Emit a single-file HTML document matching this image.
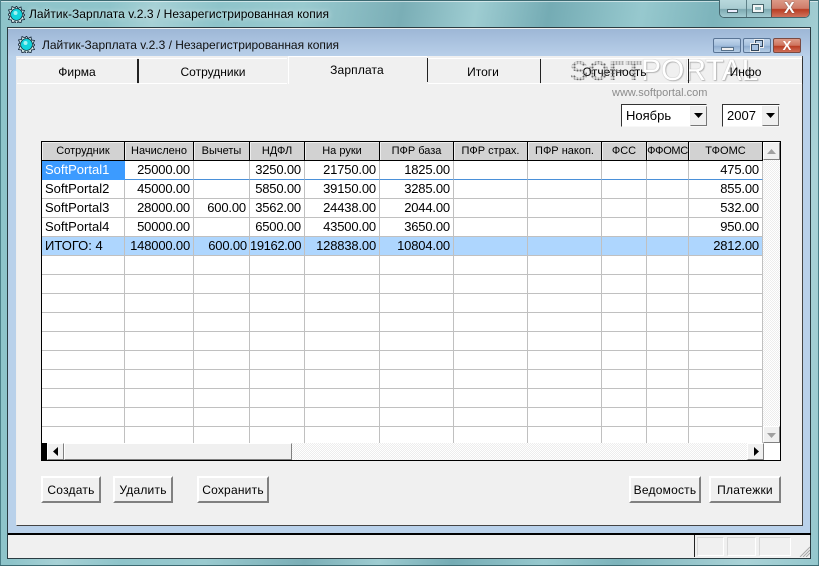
<!DOCTYPE html>
<html><head><meta charset="utf-8">
<style>
html,body{margin:0;padding:0}
body{width:819px;height:566px;overflow:hidden;position:relative;font-family:"Liberation Sans",sans-serif;color:#000;background:#8cc3c9}
.a{position:absolute}
.glass{left:0;top:0;width:819px;height:566px;background:
linear-gradient(100deg,rgba(255,255,255,0) 0,rgba(255,255,255,0) 12%,rgba(255,255,255,.22) 17%,rgba(255,255,255,0) 24%,rgba(255,255,255,.1) 33%,rgba(0,40,60,.14) 44%,rgba(255,255,255,.14) 52%,rgba(0,60,80,.18) 60%,rgba(255,255,255,.08) 70%,rgba(0,60,80,.12) 78%,rgba(255,255,255,.25) 92%,rgba(255,255,255,.05) 100%),#8ec4ca}
.t{white-space:nowrap}
.tab{position:absolute;top:58px;height:24px;font-size:12px;line-height:26px;text-align:center;background:#f0f0f0;border-top:1px solid #fff;border-bottom:1px solid #fff}
.lbl{position:absolute;top:59px;height:24px;font-size:12px;line-height:26px;text-align:center}
.sep{position:absolute;top:59px;height:24px;width:1px;background:#222}
table{position:absolute;left:42px;top:142px;border-collapse:separate;border-spacing:0;table-layout:fixed;width:721px;font-size:13px}
td,th{padding:0;overflow:hidden;white-space:nowrap;box-sizing:border-box;height:19px}
th{font-weight:normal;font-size:11px;background:#d2d2d2;border-right:1px solid #000;border-bottom:1px solid #000;text-align:center;line-height:17px;box-shadow:inset 1px 1px 0 #eee}
td{border-right:1px solid #c0c0c0;border-bottom:1px solid #c0c0c0;text-align:right;padding-right:3px;line-height:18px;background:#fff;letter-spacing:-.17px}
td:first-child{text-align:left;padding:0 0 0 3px;letter-spacing:0}
tr.s td{background:#aed6fe}
tr.r1 td{border-bottom-color:#4a90d9}
td.sel{background:#3c9bff!important;color:#fff;border-right-color:#3c9bff!important;border-bottom-color:#3c9bff!important}
.btn{position:absolute;box-sizing:border-box;top:476px;height:27px;background:#f0f0f0;border:2px solid;border-color:#fff #808080 #808080 #fff;font-size:12px;line-height:24px;text-align:center;letter-spacing:.22px}
.sb{position:absolute;box-sizing:border-box;background:#f0f0f0;border:1px solid;border-color:#fff #808080 #808080 #fff}
.combo{position:absolute;box-sizing:border-box;top:104px;height:23px;background:#fff;border:1px solid;border-color:#333 #f8f8f8 #f8f8f8 #333;font-size:13px;line-height:22px;padding-left:4px}
.hatch{background-color:#f8f8f8;background-image:repeating-conic-gradient(#ededed 0 25%,#fff 0 50%);background-size:2px 2px}
.st{position:absolute;top:537px;height:19px;box-sizing:border-box;border:1px solid #fff;border-color:#d8d8d8 #fff #fff #d8d8d8}
</style></head><body>
<div class="a glass"></div>
<div class="a" style="left:0;top:0;width:819px;height:1px;background:#3c6a72"></div>
<div class="a" style="left:0;top:0;width:1px;height:566px;background:#4b7f88"></div>
<div class="a" style="left:818px;top:0;width:1px;height:566px;background:#4b7f88"></div>
<div class="a" style="left:0;top:565px;width:819px;height:1px;background:#3c6a72"></div>
<div class="a" style="left:1px;top:1px;width:817px;height:1px;background:rgba(255,255,255,.55)"></div>

<svg class="a" style="left:8px;top:6px" width="17" height="17" viewBox="0 0 17 17"><path d="M8.500 0l1.500 2.500 3-1.500.5 3 3 .5-1.500 3 2 1.500-2 1.500 1.500 3-3 .5-.5 3-3-1.500-1.500 2.500-1.500-2.500-3 1.500-.5-3-3-.5 1.500-3L0 8.500l2-1.500-1.500-3 3-.5.5-3 3 1.500z" fill="#d8ecec" stroke="#123" stroke-width=".8"/><circle cx="8.500" cy="8.500" r="6.300" fill="#0b3540"/><circle cx="8.500" cy="8.500" r="5.500" fill="#12d4dc"/><circle cx="7.500" cy="7" r="2" fill="#9ef4f4"/></svg>
<div class="a t" style="left:29px;top:7px;font-size:12px;line-height:15px;letter-spacing:.04px;text-shadow:0 0 6px rgba(255,255,255,.8)">Лайтик-Зарплата v.2.3 / Незарегистрированная копия</div>

<!-- outer caption buttons -->
<div class="a" style="left:719px;top:0;width:91px;height:18px;border:1px solid #45666e;border-top:0;border-radius:0 0 5px 5px;box-sizing:border-box;overflow:hidden">
<div class="a" style="left:0;top:0;width:26px;height:17px;background:linear-gradient(#b8d8dc,#a9ccd1 50%,#7da9b1 55%,#a4ccd2)"></div>
<div class="a" style="left:26px;top:0;width:25px;height:17px;border-left:1px solid #5f8188;background:linear-gradient(#b8d8dc,#a9ccd1 50%,#7da9b1 55%,#a4ccd2)"></div>
<div class="a" style="left:51px;top:0;width:40px;height:17px;border-left:1px solid #6d4b44;background:linear-gradient(#dc9a88,#cf7b68 50%,#b93c22 55%,#d0735d)"></div>
<div class="a" style="left:7px;top:9px;width:9px;height:2px;background:#eef;border:1px solid #45636a"></div>
<div class="a" style="left:33px;top:5px;width:6px;height:3px;border:2px solid #f4f6f6;outline:1px solid #45636a;background:#8fb5bb"></div>
<div class="a t" style="left:64px;top:0;font:bold 16px/17px 'Liberation Sans',sans-serif;color:#fff;text-shadow:0 0 1px #333">X</div>
</div>

<!-- client -->
<div class="a" style="left:7px;top:27px;width:804px;height:532px;background:#f0f0f0;border:1px solid #2a3c42;box-sizing:border-box"></div>
<!-- MDI -->
<div class="a" style="left:8px;top:29px;width:802px;height:504px;background:#b9d1ea"></div>
<div class="a" style="left:8px;top:29px;width:802px;height:27px;background:linear-gradient(#9db7d6,#b8cfe9)"></div>
<div class="a" style="left:8px;top:533px;width:803px;height:2px;background:#000"></div>
<div class="a" style="left:16px;top:56px;width:787px;height:470px;background:#f0f0f0;border-left:1px solid #eee;border-right:1px solid #444;border-bottom:1px solid #444;box-sizing:border-box"></div>
<svg class="a" style="left:18px;top:36px" width="17" height="17" viewBox="0 0 17 17"><path d="M8.500 0l1.500 2.500 3-1.500.5 3 3 .5-1.500 3 2 1.500-2 1.500 1.500 3-3 .5-.5 3-3-1.500-1.500 2.500-1.500-2.500-3 1.500-.5-3-3-.5 1.500-3L0 8.500l2-1.500-1.500-3 3-.5.5-3 3 1.500z" fill="#d8ecec" stroke="#123" stroke-width=".8"/><circle cx="8.500" cy="8.500" r="6.300" fill="#0b3540"/><circle cx="8.500" cy="8.500" r="5.500" fill="#12d4dc"/><circle cx="7.500" cy="7" r="2" fill="#9ef4f4"/></svg>
<div class="a t" style="left:42px;top:38px;font-size:12px;line-height:15px;letter-spacing:-.02px;color:#111">Лайтик-Зарплата v.2.3 / Незарегистрированная копия</div>
<div class="a" style="left:713px;top:38px;width:28px;height:15px;box-sizing:border-box;border:1px solid #5a7596;border-radius:2px;background:linear-gradient(#c2d6ec,#a5c0de 50%,#8fadd0 55%,#b5cde6)"><div class="a" style="left:7px;top:8px;width:11px;height:2px;background:#eee;border:1px solid #56708a"></div></div>
<div class="a" style="left:743px;top:38px;width:28px;height:15px;box-sizing:border-box;border:1px solid #5a7596;border-radius:2px;background:linear-gradient(#c2d6ec,#a5c0de 50%,#8fadd0 55%,#b5cde6)"><div class="a" style="left:11px;top:1px;width:6px;height:5px;border:1px solid #33475c;outline:1px solid #eee"></div><div class="a" style="left:7px;top:5px;width:6px;height:5px;border:1px solid #33475c;outline:1px solid #eee;background:#a5c0de"></div></div>
<div class="a" style="left:773px;top:38px;width:28px;height:15px;box-sizing:border-box;border:1px solid #7a4a42;border-radius:2px;background:linear-gradient(#dd9b88,#cf735d 50%,#b93c22 55%,#cf6f58);color:#fff;font:bold 13px/13px 'Liberation Sans',sans-serif;text-align:center">X</div>

<!-- tabs -->
<div class="tab" style="left:17px;width:120px">Фирма</div>
<div class="sep" style="left:137px;width:2px"></div>
<div class="tab" style="left:139px;width:148px">Сотрудники</div>
<div class="a" style="left:288px;top:56px;width:137px;height:28px;background:#f0f0f0;border-top:1px solid #fff;box-sizing:border-box;border-left:1px solid #fff;font-size:12px;line-height:26px;text-align:center;letter-spacing:.15px">Зарплата</div>
<div class="a" style="left:425px;top:56px;width:2px;height:28px;background:#f0f0f0;border-top:1px solid #fff;box-sizing:border-box"></div>
<div class="sep" style="left:427px;top:58px"></div>
<div class="tab" style="left:428px;width:110px">Итоги</div>
<div class="a" style="left:538px;top:58px;width:2px;height:24px;background:#f0f0f0;border-top:1px solid #fff;border-bottom:1px solid #fff"></div>
<div class="sep" style="left:540px"></div>
<div class="tab" style="left:541px;width:147px"></div>
<div class="tab" style="left:689px;width:113px"></div>
<div class="a" style="left:802px;top:58px;width:1px;height:26px;background:#333"></div>

<!-- watermark -->
<div class="a t" style="left:641px;top:56px;font-size:30px;line-height:30px;color:#fff;text-shadow:0 0 1px #999,1px 1px 1px #bbb">PORTAL</div>
<div class="sep" style="left:688px"></div>
<div class="lbl" style="left:541px;width:147px">Отчетность</div>
<div class="lbl" style="left:689px;width:113px">Инфо</div>
<div class="a t" style="left:570px;top:57px;font:bold 27px/28px 'Liberation Sans',sans-serif;color:transparent;background:radial-gradient(circle,#666 0 1px,transparent 1.2px) 0 0/3px 3px;-webkit-background-clip:text;background-clip:text">SOFT</div>
<div class="a t" style="left:612px;top:87px;font-size:11px;line-height:13px;color:#8c8c8c">www.softportal.com</div>

<!-- combos -->
<div class="combo" style="left:621px;width:86px">Ноябрь<div class="sb" style="left:68px;top:1px;width:17px;height:20px;border-color:#eee #777 #777 #eee"><svg class="a" style="left:3px;top:6px" width="9" height="5"><path d="M0 0h9L4.500 5z"/></svg></div></div>
<div class="combo" style="left:722px;width:58px">2007<div class="sb" style="left:39px;top:1px;width:17px;height:20px;border-color:#eee #777 #777 #eee"><svg class="a" style="left:3px;top:6px" width="9" height="5"><path d="M0 0h9L4.500 5z"/></svg></div></div>

<!-- grid -->
<div class="a" style="left:41px;top:141px;width:740px;height:320px;box-sizing:border-box;border:1px solid #000;background:#fff"></div>
<table>
<colgroup><col style="width:83px"><col style="width:69px"><col style="width:56px"><col style="width:55px"><col style="width:75px"><col style="width:74px"><col style="width:74px"><col style="width:74px"><col style="width:45px"><col style="width:42px"><col style="width:74px"></colgroup>
<tr><th>Сотрудник</th><th>Начислено</th><th>Вычеты</th><th>НДФЛ</th><th>На руки</th><th>ПФР база</th><th>ПФР страх.</th><th>ПФР накоп.</th><th>ФСС</th><th style="letter-spacing:-.35px">ФФОМС</th><th>ТФОМС</th></tr>
<tr class="r1"><td class="sel">SoftPortal1</td><td>25000.00</td><td></td><td>3250.00</td><td>21750.00</td><td>1825.00</td><td></td><td></td><td></td><td></td><td>475.00</td></tr>
<tr><td>SoftPortal2</td><td>45000.00</td><td></td><td>5850.00</td><td>39150.00</td><td>3285.00</td><td></td><td></td><td></td><td></td><td>855.00</td></tr>
<tr><td>SoftPortal3</td><td>28000.00</td><td>600.00</td><td>3562.00</td><td>24438.00</td><td>2044.00</td><td></td><td></td><td></td><td></td><td>532.00</td></tr>
<tr><td>SoftPortal4</td><td>50000.00</td><td></td><td>6500.00</td><td>43500.00</td><td>3650.00</td><td></td><td></td><td></td><td></td><td>950.00</td></tr>
<tr class="s"><td>ИТОГО: 4</td><td>148000.00</td><td style="padding-right:2px">600.00</td><td style="padding-right:3px;letter-spacing:-.4px">19162.00</td><td>128838.00</td><td>10804.00</td><td></td><td></td><td></td><td></td><td>2812.00</td></tr>
<tr><td></td><td></td><td></td><td></td><td></td><td></td><td></td><td></td><td></td><td></td><td></td></tr>
<tr><td></td><td></td><td></td><td></td><td></td><td></td><td></td><td></td><td></td><td></td><td></td></tr>
<tr><td></td><td></td><td></td><td></td><td></td><td></td><td></td><td></td><td></td><td></td><td></td></tr>
<tr><td></td><td></td><td></td><td></td><td></td><td></td><td></td><td></td><td></td><td></td><td></td></tr>
<tr><td></td><td></td><td></td><td></td><td></td><td></td><td></td><td></td><td></td><td></td><td></td></tr>
<tr><td></td><td></td><td></td><td></td><td></td><td></td><td></td><td></td><td></td><td></td><td></td></tr>
<tr><td></td><td></td><td></td><td></td><td></td><td></td><td></td><td></td><td></td><td></td><td></td></tr>
<tr><td></td><td></td><td></td><td></td><td></td><td></td><td></td><td></td><td></td><td></td><td></td></tr>
<tr><td></td><td></td><td></td><td></td><td></td><td></td><td></td><td></td><td></td><td></td><td></td></tr>
<tr><td></td><td></td><td></td><td></td><td></td><td></td><td></td><td></td><td></td><td></td><td></td></tr>
</table>
<!-- scrollbars -->
<div class="a hatch" style="left:763px;top:142px;width:17px;height:301px"></div>
<div class="a" style="left:762px;top:142px;width:1px;height:19px;background:#000"></div>
<div class="sb" style="left:763px;top:142px;width:17px;height:18px"><svg class="a" style="left:3px;top:6px" width="9" height="5"><path d="M0 5h9L4.500 0z" fill="#a0a0a0"/></svg></div>
<div class="sb" style="left:763px;top:426px;width:17px;height:17px"><svg class="a" style="left:3px;top:6px" width="9" height="5"><path d="M0 0h9L4.500 5z" fill="#a0a0a0"/></svg></div>
<div class="a" style="left:42px;top:443px;width:5px;height:17px;background:#000"></div>
<div class="a hatch" style="left:47px;top:443px;width:716px;height:17px"></div>
<div class="sb" style="left:47px;top:443px;width:17px;height:17px"><svg class="a" style="left:5px;top:3px" width="5" height="9"><path d="M5 0v9L0 4.500z"/></svg></div>
<div class="sb" style="left:64px;top:443px;width:228px;height:17px"></div>
<div class="sb" style="left:747px;top:443px;width:17px;height:17px"><svg class="a" style="left:6px;top:3px" width="5" height="9"><path d="M0 0v9L5 4.500z"/></svg></div>
<div class="a" style="left:764px;top:443px;width:16px;height:17px;background:#fff"></div>

<!-- buttons -->
<div class="btn" style="left:41px;width:60px">Создать</div>
<div class="btn" style="left:113px;width:60px">Удалить</div>
<div class="btn" style="left:197px;width:72px">Сохранить</div>
<div class="btn" style="left:629px;width:72px">Ведомость</div>
<div class="btn" style="left:709px;width:72px">Платежки</div>

<!-- status -->
<div class="a" style="left:694px;top:535px;width:1px;height:22px;background:#222"></div>
<div class="st" style="left:697px;width:27px"></div>
<div class="st" style="left:727px;width:29px"></div>
<div class="st" style="left:759px;width:32px"></div>
<svg class="a" style="left:799px;top:546px" width="11" height="11"><path d="M1 11L11 1M4 11l7-7M7 11l4-4" stroke="#a8a8a8" stroke-width="1" fill="none"/></svg>
</body></html>
